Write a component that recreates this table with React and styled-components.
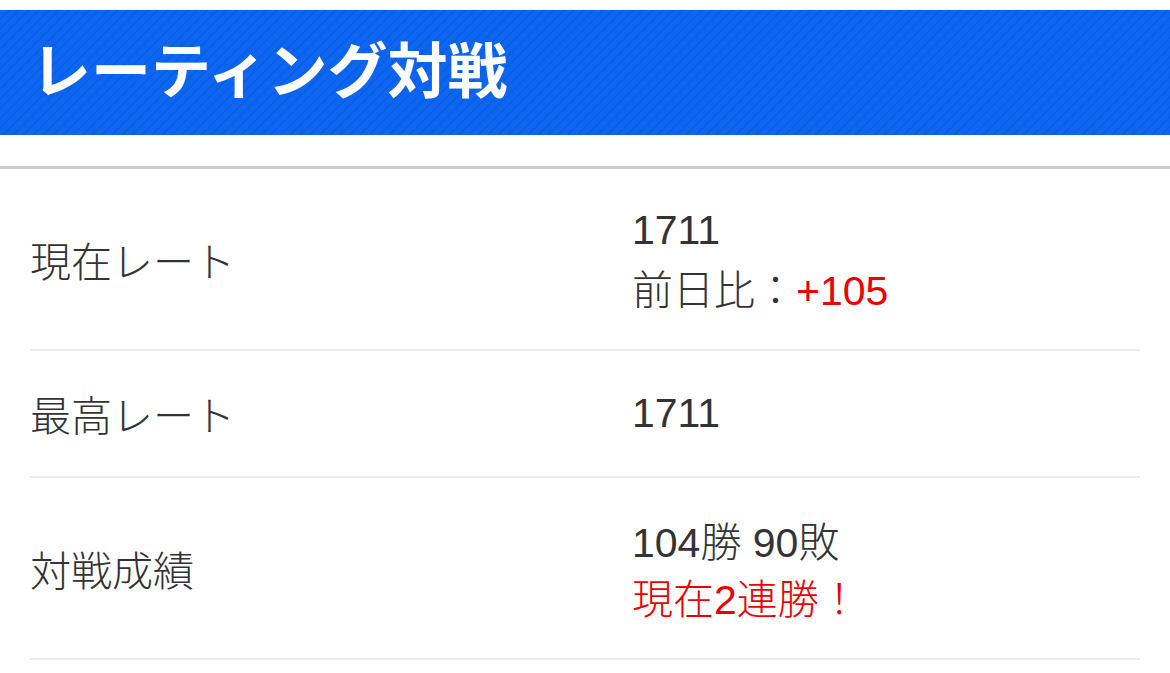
import React from 'react';
import styled, { createGlobalStyle } from 'styled-components';

const GlobalStyle = createGlobalStyle`
  html, body {
    margin: 0;
    padding: 0;
    background: #fff;
  }
  body {
    font-family: "Liberation Sans", "Noto Sans CJK JP", sans-serif;
    color: #333;
  }
`;

const Page = styled.div`
  padding-top: 10px;
`;

const Header = styled.header`
  height: 125px;
  box-sizing: border-box;
  display: flex;
  align-items: center;
  padding: 0 0 11px 31px;
  background-color: #0d66f1;
  background-image: repeating-linear-gradient(
    -45deg,
    rgba(0, 0, 0, 0) 0px,
    rgba(0, 0, 0, 0) 5px,
    rgba(0, 40, 140, 0.12) 5px,
    rgba(0, 40, 140, 0.12) 7px
  );
`;

const Title = styled.h1`
  margin: 0;
  color: #fff;
  font-family: "Noto Sans CJK JP", sans-serif;
  font-weight: 700;
  font-size: 60px;
  line-height: 1;
`;

const Table = styled.div`
  margin-top: 31px;
  border-top: 3px solid #cccccc;
  padding: 0 30px;
`;

const Row = styled.div`
  display: grid;
  grid-template-columns: 602px 1fr;
  align-items: center;
  padding: 33px 0;
  border-bottom: 2px solid #ececec;
`;

const Label = styled.div`
  font-size: 41px;
  line-height: 59px;
  font-weight: 300;
  font-family: "Noto Sans CJK JP", sans-serif;
`;

const Value = styled.div`
  font-size: 41px;
  line-height: 57px;
`;

const Line = styled.div`
  height: 57px;
  overflow: visible;
  white-space: nowrap;
  color: ${(p) => (p.$red ? '#ec0000' : '#333')};
`;

const Jp = styled.span`
  font-family: "Noto Sans CJK JP", sans-serif;
  font-weight: 300;
`;

const Red = styled.span`
  color: #ec0000;
`;

export default function App() {
  return (
    <Page>
      <GlobalStyle />
      <Header>
        <Title>レーティング対戦</Title>
      </Header>
      <Table>
        <Row>
          <Label>現在レート</Label>
          <Value>
            <Line>1711</Line>
            <Line>
              <Jp>前日比：</Jp>
              <Red>+105</Red>
            </Line>
          </Value>
        </Row>
        <Row>
          <Label>最高レート</Label>
          <Value>
            <Line>1711</Line>
          </Value>
        </Row>
        <Row>
          <Label>対戦成績</Label>
          <Value>
            <Line>
              104<Jp>勝</Jp> 90<Jp>敗</Jp>
            </Line>
            <Line $red>
              <Jp>現在</Jp>2<Jp>連勝！</Jp>
            </Line>
          </Value>
        </Row>
      </Table>
    </Page>
  );
}
